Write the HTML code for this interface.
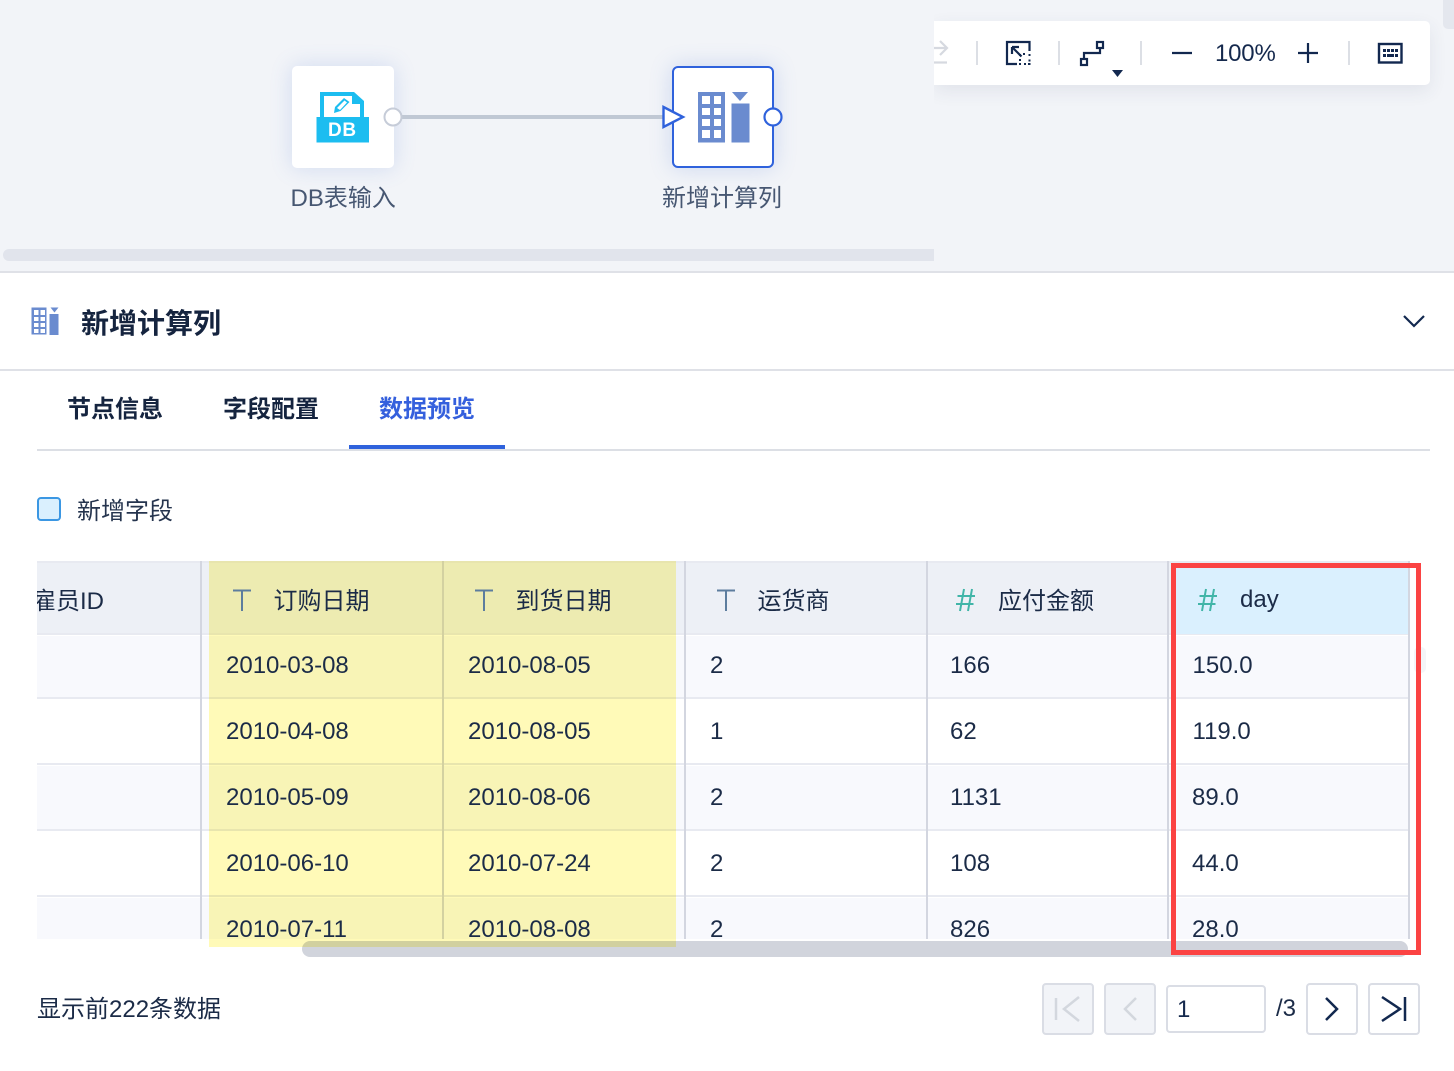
<!DOCTYPE html>
<html lang="zh"><head><meta charset="utf-8"><title>新增计算列</title>
<style>
html,body{margin:0;padding:0;background:#fff}
body{width:1454px;height:1071px;position:relative;overflow:hidden;font-family:"Liberation Sans","Noto Sans CJK SC",sans-serif;color:#1a2a44}
.a{position:absolute}
.t{position:absolute;white-space:nowrap;line-height:30px;height:30px}
.cell{font-size:24px;color:#1b2b47}
.hl{position:absolute;left:37px;width:1372px;height:2px;background:#e8eaf1}
.vl{position:absolute;width:2px;top:561px;height:378px;background:#d3d6e0}
.ht{font-size:24px;color:#1b2b47}
.pg{position:absolute;top:983px;width:48px;height:48px;border:2px solid #dadde5;border-radius:4px;background:#fff}
.sep{position:absolute;top:41px;width:2px;height:24px;background:#dcdfe5}
</style></head><body>

<!-- canvas -->
<div class="a" style="left:0;top:0;width:1454px;height:271px;background:#f2f4f8"></div>
<div class="a" style="left:0;top:271px;width:1454px;height:2px;background:#dfe1e7"></div>
<div class="a" style="left:1443px;top:0;width:11px;height:29px;background:#e4e7ee;border-radius:0 0 0 5px"></div>

<!-- toolbar -->
<div class="a" style="left:934px;top:21px;width:496px;height:64px;background:#fff;border-radius:0 5px 5px 0;box-shadow:0 6px 18px rgba(60,70,100,.09)"></div>
<div class="a" style="left:900px;top:0;width:34px;height:271px;background:#f2f4f8"></div>
<div class="a" style="left:3px;top:249px;width:931px;height:12px;background:#e1e4ec;border-radius:6px 0 0 6px"></div>
<svg class="a" style="left:934px;top:21px" width="496" height="70" viewBox="934 21 496 70">
<g fill="none" stroke="#d6d9e0" stroke-width="2.200"><path d="M934 48H947M940 41L947 48L940 55"/><path d="M934 62.500H947"/></g>
<g fill="none" stroke="#12284f" stroke-width="2.200">
<path d="M1029.500 51V42H1007V64H1017"/>
<path d="M1012 47L1021.500 56.500M1012 47H1019M1012 47V54"/>
<path d="M1019 64H1021M1024 64H1026M1028 64H1030.500M1029.500 61.500V59.500M1029.500 56V54M1020 61V59M1020 56V54M1023 54H1025" stroke-width="2"/>
<rect x="1081" y="59" width="6" height="6"/><rect x="1097" y="42" width="6" height="6"/>
<path d="M1084 59V53H1100V48"/>
<path d="M1172 53H1192M1298 53H1318M1308 43V63"/>
<rect x="1379" y="44" width="22.500" height="18.500" stroke-width="2.400"/>
</g>
<g fill="#12284f"><rect x="1383" y="49" width="3" height="3"/><rect x="1387" y="49" width="3" height="3"/><rect x="1391" y="49" width="3" height="3"/><rect x="1395" y="49" width="3" height="3"/><rect x="1383" y="54" width="3" height="3"/><rect x="1387" y="54" width="7" height="3"/><rect x="1395" y="54" width="3" height="3"/></g>
<path d="M1112 70H1123L1117.500 77Z" fill="#12284f"/>
</svg>
<div class="sep" style="left:976px"></div><div class="sep" style="left:1058px"></div><div class="sep" style="left:1140px"></div><div class="sep" style="left:1348px"></div>
<div class="t" style="left:1215px;top:39px;font-size:24px;color:#15294d;letter-spacing:-.2px">100%</div>

<!-- nodes -->
<div class="a" style="left:292px;top:66px;width:102px;height:102px;background:#fff;border-radius:5px;box-shadow:0 0 22px rgba(90,130,220,.22)"></div>
<div class="a" style="left:672px;top:66px;width:98px;height:98px;background:#fff;border:2px solid #2f62dc;border-radius:6px;box-shadow:0 0 22px rgba(90,130,220,.25)"></div>
<svg class="a" style="left:280px;top:60px" width="520" height="120" viewBox="280 60 520 120">
<rect x="396" y="115" width="268" height="4" fill="#c0c8d4"/>
<circle cx="393" cy="117" r="8.500" fill="#fff" stroke="#c6ccd8" stroke-width="2"/>
<path d="M663.500 107L683 117L663.500 127Z" fill="#fff" stroke="#2f62dc" stroke-width="2.400"/>
<circle cx="773" cy="117" r="8.500" fill="#fff" stroke="#2f62dc" stroke-width="2.200"/>
<!-- DB icon -->
<path d="M320 92H354L364 101V118H320Z" fill="#1cbdf0"/>
<path d="M324 96H352V104H360V118H324Z" fill="#fff"/>
<path d="M334 113L335 107L344 98L349.500 102L340.500 111Z" fill="#1cbdf0"/>
<path d="M337 108L344.500 100.500L347 102.500L340 110Z" fill="#fff"/>
<rect x="316.500" y="117" width="52.500" height="25.500" fill="#1cbdf0"/>
<!-- add col icon -->
<rect x="698" y="92" width="27" height="50.500" fill="#6a8bcf"/>
<g fill="#fff">
<rect x="702" y="96" width="8" height="8"/><rect x="714" y="96" width="7" height="8"/>
<rect x="702" y="108" width="8" height="7"/><rect x="714" y="108" width="7" height="7"/>
<rect x="702" y="119" width="8" height="7"/><rect x="714" y="119" width="7" height="7"/>
<rect x="702" y="130" width="8" height="8"/><rect x="714" y="130" width="7" height="8"/>
</g>
<rect x="731.500" y="103.500" width="18" height="39" fill="#6a8bcf"/>
<path d="M732 92H748L740 101Z" fill="#6a8bcf"/>
</svg>
<div class="t" style="left:290.500px;top:184px;font-size:24px;color:#475772">DB表输入</div>
<div class="t" style="left:662px;top:184px;font-size:24px;color:#475772">新增计算列</div>
<div class="t" style="left:328px;top:116px;font-size:19px;font-weight:700;color:#fff;letter-spacing:.6px">DB</div>

<!-- panel header -->
<svg class="a" style="left:30px;top:305px" width="32" height="32" viewBox="30 305 32 32">
<rect x="31.500" y="307.500" width="15" height="27" fill="#6a8bcf"/>
<g fill="#fff"><rect x="34" y="310" width="4.500" height="5"/><rect x="40.500" y="310" width="4.500" height="5"/><rect x="34" y="317" width="4.500" height="4"/><rect x="40.500" y="317" width="4.500" height="4"/><rect x="34" y="323" width="4.500" height="4"/><rect x="40.500" y="323" width="4.500" height="4"/><rect x="34" y="329" width="4.500" height="4"/><rect x="40.500" y="329" width="4.500" height="4"/></g>
<rect x="49.500" y="314" width="9" height="21" fill="#6a8bcf"/><path d="M50.500 307.500H58.500L54.500 312.500Z" fill="#6a8bcf"/>
</svg>
<div class="t" style="left:81px;top:309px;font-size:28px;font-weight:700;color:#15243f">新增计算列</div>
<svg class="a" style="left:1400px;top:311px" width="28" height="22"><path d="M4 5L14 15L24 5" fill="none" stroke="#12284f" stroke-width="2.200"/></svg>
<div class="a" style="left:0;top:369px;width:1454px;height:2px;background:#dfe1e7"></div>

<!-- tabs -->
<div class="t" style="left:67px;top:395px;font-size:24px;font-weight:700;color:#15243f">节点信息</div>
<div class="t" style="left:223px;top:395px;font-size:24px;font-weight:700;color:#15243f">字段配置</div>
<div class="t" style="left:379px;top:395px;font-size:24px;font-weight:700;color:#3560dd">数据预览</div>
<div class="a" style="left:37px;top:449px;width:1393px;height:2px;background:#dcdfe5"></div>
<div class="a" style="left:349px;top:445px;width:156px;height:4px;background:#2f62dc"></div>

<!-- checkbox -->
<div class="a" style="left:37px;top:497px;width:20px;height:20px;border:2px solid #3b97e3;border-radius:4px;background:#daf0fe"></div>
<div class="t" style="left:77px;top:497px;font-size:24px;color:#25344e">新增字段</div>

<!-- table background -->
<div class="a" style="left:37px;top:561px;width:1372px;height:73px;background:#edf0f6"></div>
<div class="a" style="left:37px;top:636px;width:1372px;height:62px;background:#f8f9fd"></div>
<div class="a" style="left:37px;top:766px;width:1372px;height:64px;background:#f8f9fd"></div>
<div class="a" style="left:37px;top:898px;width:1372px;height:41px;background:#f8f9fd"></div>
<div class="hl" style="top:561px"></div>
<div class="hl" style="top:633px"></div>
<div class="hl" style="top:697px"></div>
<div class="hl" style="top:763px"></div>
<div class="hl" style="top:829px"></div>
<div class="hl" style="top:895px"></div>
<div class="vl" style="left:200px"></div>
<div class="vl" style="left:442px"></div>
<div class="vl" style="left:684px"></div>
<div class="vl" style="left:926px"></div>
<div class="vl" style="left:1167px"></div>
<div class="vl" style="left:1408px"></div>
<div class="a" style="left:1176px;top:568px;width:232px;height:66px;background:#daf0fe"></div>

<!-- scrollbar -->
<div class="a" style="left:302px;top:941px;width:1106px;height:16px;background:#d1d4dc;border-radius:8px"></div>
<div class="a" style="left:1414px;top:647px;width:12px;height:26px;background:#f4f5f8;border-radius:5px"></div>

<!-- yellow overlay -->
<div class="a" style="left:209px;top:561px;width:467px;height:386px;background:#fffab8;mix-blend-mode:multiply"></div>

<!-- table headers -->
<div class="a" style="left:37px;top:587px;width:120px;height:30px;overflow:hidden"><div class="t ht" style="left:-5px;top:0">雇员ID</div></div>
<svg class="a" style="left:225px;top:580px" width="1000" height="40" viewBox="225 580 1000 40">
<g fill="none" stroke="#5d7d9e" stroke-width="2">
<path d="M233 590.500H251M242 590.500V611"/>
<path d="M475 590.500H493M484 590.500V611"/>
<path d="M717 590.500H735M726 590.500V611"/>
</g>
<g fill="none" stroke="#41b5a8" stroke-width="2">
<path d="M964 589L960 611M972 589L968 611M957.500 596H975M956 604H973.500"/>
<path d="M1206 589L1202 611M1214 589L1210 611M1199.500 596H1217M1198 604H1215.500"/>
</g>
</svg>
<div class="t ht" style="left:273.500px;top:587px">订购日期</div>
<div class="t ht" style="left:515.500px;top:587px">到货日期</div>
<div class="t ht" style="left:757.500px;top:587px">运货商</div>
<div class="t ht" style="left:998px;top:587px">应付金额</div>
<div class="t ht" style="left:1240px;top:585px">day</div>

<!-- cells -->
<div class="t cell" style="left:226px;top:651px">2010-03-08</div><div class="t cell" style="left:468px;top:651px">2010-08-05</div><div class="t cell" style="left:710px;top:651px">2</div><div class="t cell" style="left:950px;top:651px">166</div><div class="t cell" style="left:1192.500px;top:651px">150.0</div>
<div class="t cell" style="left:226px;top:717px">2010-04-08</div><div class="t cell" style="left:468px;top:717px">2010-08-05</div><div class="t cell" style="left:710px;top:717px">1</div><div class="t cell" style="left:950px;top:717px">62</div><div class="t cell" style="left:1192.500px;top:717px">119.0</div>
<div class="t cell" style="left:226px;top:783px">2010-05-09</div><div class="t cell" style="left:468px;top:783px">2010-08-06</div><div class="t cell" style="left:710px;top:783px">2</div><div class="t cell" style="left:950px;top:783px">1131</div><div class="t cell" style="left:1192px;top:783px">89.0</div>
<div class="t cell" style="left:226px;top:849px">2010-06-10</div><div class="t cell" style="left:468px;top:849px">2010-07-24</div><div class="t cell" style="left:710px;top:849px">2</div><div class="t cell" style="left:950px;top:849px">108</div><div class="t cell" style="left:1192px;top:849px">44.0</div>
<div class="a" style="left:37px;top:910px;width:1372px;height:29px;overflow:hidden">
<div class="t cell" style="left:189px;top:5px">2010-07-11</div><div class="t cell" style="left:431px;top:5px">2010-08-08</div><div class="t cell" style="left:673px;top:5px">2</div><div class="t cell" style="left:913px;top:5px">826</div><div class="t cell" style="left:1155px;top:5px">28.0</div>
</div>

<!-- red box -->
<div class="a" style="left:1171px;top:563px;width:240px;height:382px;border:5px solid #fb4343"></div>

<!-- footer -->
<div class="t" style="left:37px;top:995px;font-size:24px;color:#1b2b47">显示前222条数据</div>
<div class="pg" style="left:1042px;background:#f2f4f8"></div>
<div class="pg" style="left:1104px;background:#f2f4f8"></div>
<div class="a" style="left:1166px;top:985px;width:96px;height:44px;border:2px solid #dadde5;border-radius:4px;background:#fff"></div>
<div class="t" style="left:1177px;top:995px;font-size:24px;color:#15294d">1</div>
<div class="t" style="left:1276px;top:994px;font-size:24px;color:#1b2b47">/3</div>
<div class="pg" style="left:1306px"></div>
<div class="pg" style="left:1368px"></div>
<svg class="a" style="left:1040px;top:980px" width="380" height="56" viewBox="1040 980 380 56">
<g fill="none" stroke="#d3d7de" stroke-width="2.500"><path d="M1056 998V1020M1079 997L1064 1009L1079 1021"/><path d="M1136 998L1125 1009L1136 1020"/></g>
<g fill="none" stroke="#12284f" stroke-width="2.500"><path d="M1326 998L1337 1009L1326 1020"/><path d="M1382 997L1400 1009L1382 1021M1405 997V1021"/></g>
</svg>
</body></html>
